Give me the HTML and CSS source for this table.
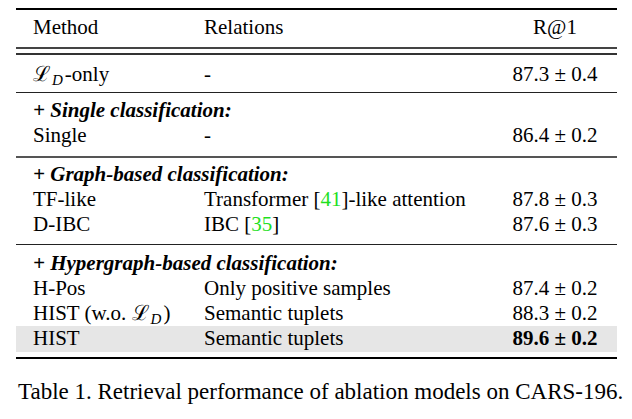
FILE: index.html
```html
<!DOCTYPE html>
<html>
<head>
<meta charset="utf-8">
<link rel="stylesheet" href="styles.css">
</head>
<body>
<div class="page">
  <div class="tbl">
    <div class="row head"><span>Method</span><span>Relations</span><span class="num">R@1</span></div>
    <div class="grp g1">
      <div class="row"><span><span class="cal">ℒ</span><sub class="sub">D</sub>-only</span><span>-</span><span class="num">87.3 ± 0.4</span></div>
    </div>
    <div class="grp g2">
      <div class="row"><span class="sec">+ Single classification:</span></div>
      <div class="row"><span>Single</span><span>-</span><span class="num">86.4 ± 0.2</span></div>
    </div>
    <div class="grp g3">
      <div class="row"><span class="sec">+ Graph-based classification:</span></div>
      <div class="row"><span>TF-like</span><span>Transformer [<span class="cite">41</span>]-like attention</span><span class="num">87.8 ± 0.3</span></div>
      <div class="row"><span>D-IBC</span><span>IBC [<span class="cite">35</span>]</span><span class="num">87.6 ± 0.3</span></div>
    </div>
    <div class="grp g4">
      <div class="row"><span class="sec">+ Hypergraph-based classification:</span></div>
      <div class="row"><span>H-Pos</span><span>Only positive samples</span><span class="num">87.4 ± 0.2</span></div>
      <div class="row"><span>HIST (w.o. <span class="cal">ℒ</span><sub class="sub">D</sub>)</span><span>Semantic tuplets</span><span class="num">88.3 ± 0.2</span></div>
      <div class="row best"><span>HIST</span><span>Semantic tuplets</span><span class="num bold">89.6 ± 0.2</span></div>
    </div>
  </div>
  <p class="caption">Table 1. Retrieval performance of ablation models on CARS-196.</p>
</div>
</body>
</html>
```
FILE: styles.css
```css
html, body {
  margin: 0;
  padding: 0;
  background: #fff;
}
body, .page, .tbl, .caption {
  font-family: "Liberation Serif";
  color: #000;
}
.page {
  padding: 8px 0 0 16px;
  width: 601px;
}
.tbl {
  border-top: 2px solid #000;
  border-bottom: 2px solid #000;
  font-size: 21px;
  line-height: 25px;
}
.row {
  display: grid;
  grid-template-columns: 171px 1fr 90px;
  padding: 0 17px;
  white-space: nowrap;
}
.row .sec {
  grid-column: 1 / 4;
  font-weight: bold;
  font-style: italic;
}
.num {
  text-align: center;
}
.bold {
  font-weight: bold;
}
.head {
  padding-top: 5px;
  padding-bottom: 7px;
  border-bottom: 2px solid #444;
  margin-bottom: 4px;
}
.grp {
  border-top: 1px solid #222;
}
.g1 {
  border-top: 2px solid #333;
  padding-top: 7px;
  padding-bottom: 5px;
}
.g2 {
  padding-top: 5px;
  padding-bottom: 8px;
}
.g3 {
  border-top: 2px solid #555;
  padding-top: 4px;
  padding-bottom: 7px;
}
.g4 {
  padding-top: 6px;
  padding-bottom: 5px;
}
.best {
  background: #e6e6e6;
  padding-bottom: 1px;
}
.cite {
  color: #1fe01f;
}
.cal {
  font-size: 21px;
}
.sub {
  font-family: "Liberation Serif";
  font-style: italic;
  font-size: 15px;
  vertical-align: -4px;
  line-height: 0;
  margin-left: 1px;
  margin-right: 2px;
}
.caption {
  margin: 19px 0 0 2px;
  font-size: 23px;
  line-height: 28px;
  white-space: nowrap;
}
```
